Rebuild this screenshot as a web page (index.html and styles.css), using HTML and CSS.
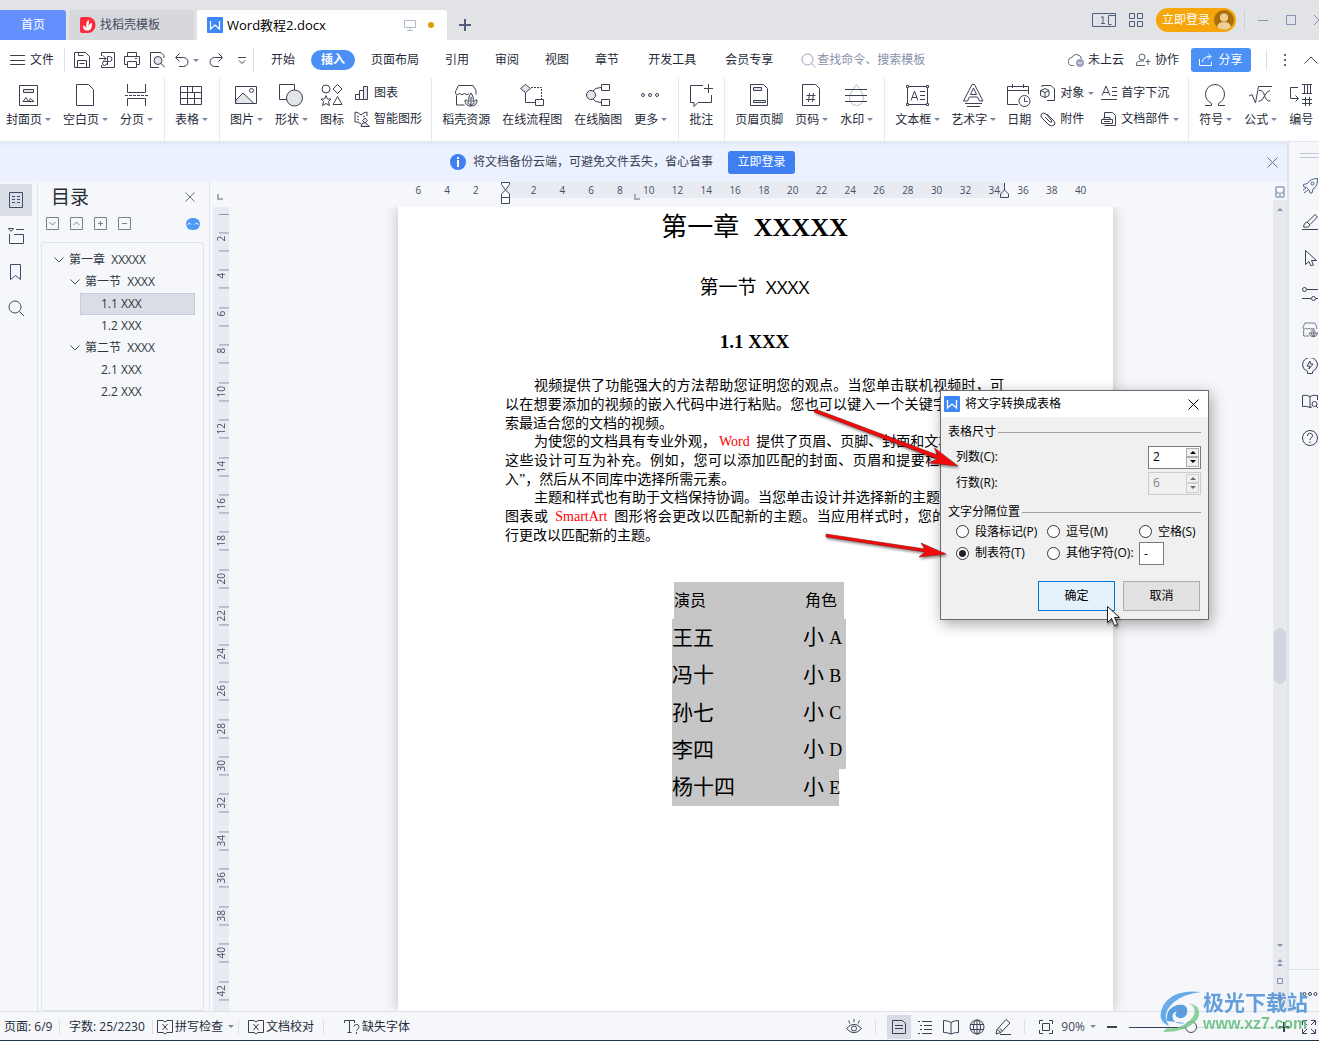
FILE: index.html
```html
<!DOCTYPE html>
<html lang="zh-CN">
<head>
<meta charset="utf-8">
<title>Word教程2.docx</title>
<link rel="stylesheet" href="styles.css">
</head>
<body>
<svg class="defs" aria-hidden="true">
  <symbol id="logo" viewBox="0 0 16 16"><rect width="16" height="16" rx="1" fill="#3d86f5"/><path d="M3.500 4v8l4.500-4 4.500 4V4" fill="none" stroke="#fff" stroke-width="1.300"/></symbol>
  <symbol id="shop" viewBox="0 0 24 24"><path d="M4.500 1.500h14.500l3 5v4M4.500 1.500l-3 6v2q1.500 2.500 4 0 2.500 2.500 5 0 2.500 2.500 4.500 0M2.500 11.500v9.500h8"/><path d="M17 22c-5 0-6-3-6-6 2 0 3 1 4 2-1-4 0-6 2-9 2 3 3 5 2 9 1-1 2-2 4-2 0 3-1 6-6 6zM17 13v9M13.500 18.500l3.500 3 3.500-3" fill="#e3e5ea"/></symbol>
</svg>
<div class="app">
  <header class="tabs">
    <button class="tab home">首页</button>
    <button class="tab docer"><svg width="16" height="16" viewBox="0 0 16 16"><path d="M2 0h6a7.500 8 0 0 1 0 16H2a2 2 0 0 1-2-2V2a2 2 0 0 1 2-2z" fill="#fb2b3a"/><path d="M7 13.500c-3 0-4-2-4-5 2 0 3 2 3.500 3C6 8 6 5 8.500 2.500c1 3 0 6-1 8.500 1-3 2.500-5 4.500-5 0 5-1 7.500-5 7.500z" fill="#fff"/></svg>找稻壳模板</button>
    <button class="tab doc"><svg width="16" height="16"><use href="#logo"/></svg><span class="tabname">Word教程2.docx</span><svg width="12" height="12" viewBox="0 0 12 12" fill="none" stroke="#b0b8cc"><path d="M.5 1.500h11v7H.5zM6 8.500v3M3 11.500h6"/></svg><i class="dot"></i></button>
    <button class="newtab" aria-label="新建"><svg width="12" height="12" viewBox="0 0 12 12" stroke="#4f5d7d" stroke-width="2"><path d="M6 0v12M0 6h12"/></svg></button>
    <span class="grow"></span>
    <div class="winctl">
      <svg width="24" height="14" viewBox="0 0 24 14" fill="none" stroke="#4f5d7d"><path d="M.5.5h23v13H.5zM23 2.500h-6.500v9h3M9 4.500l2-1v7M9 10.500h4"/></svg>
      <svg width="14" height="14" viewBox="0 0 14 14" fill="none" stroke="#4f5d7d"><path d="M.5.500h5v5h-5zM8.500.500h5v5h-5zM.5 8.500h5v5h-5zM8.500 8.500h5v5h-5z"/></svg>
      <button class="login">立即登录<svg width="20" height="20" viewBox="0 0 20 20"><circle cx="10" cy="10" r="10" fill="#a96f0c"/><circle cx="10" cy="7.500" r="4" fill="#f0cf94"/><path d="M3 17q1-5 7-5t7 5q-3 3-7 3t-7-3z" fill="#f0cf94"/></svg></button>
      <i class="vbar"></i>
      <svg width="10" height="10" viewBox="0 0 10 10" stroke="#8492b4"><path d="M0 5.500h10"/></svg>
      <svg width="10" height="10" viewBox="0 0 10 10" fill="none" stroke="#8492b4"><path d="M.5.500h9v9h-9z"/></svg>
      <svg width="10" height="10" viewBox="0 0 10 10" stroke="#8492b4"><path d="M0 0l10 10M10 0L0 10"/></svg>
    </div>
  </header>

  <div class="menubar">
    <button class="file"><svg width="15" height="12" viewBox="0 0 15 12" stroke="#3b4152"><path d="M0 1.500h15M0 6.500h15M0 10.500h15"/></svg>文件</button>
    <i class="vbar"></i>
    <div class="quick">
      <svg viewBox="0 0 16 16"><path d="M.5.500h11l4 4v11H.5zM3.500 15V8.500h9V15M4.500.500v3h5M5.500 11.500h5"/></svg>
      <svg viewBox="0 0 16 16"><path d="M2.500 4V.5h13v15h-13V13M0 6.500h7M4 3.500l3 3-3 3M8.500 13V4.500h2a2.500 2.500 0 0 1 0 5H5.500a2 2 0 1 0 2 2"/></svg>
      <svg viewBox="0 0 16 16"><path d="M3.500 4.500v-4h9v4M3.500 12.500h-3v-8h15v8h-3M3.500 9.500h9v6h-9zM11 6.500h2"/></svg>
      <svg viewBox="0 0 16 16"><path d="M15 6V3.500l-3-3H1.500v15H10"/><circle cx="9" cy="8.500" r="4" fill="#e3e5ea"/><path d="M12 11.500l4 4"/></svg>
      <span class="undo"><svg viewBox="0 0 16 16"><path d="M5.500 1.500l-4 4 4 4M2 5.500h7.500a4.500 4.500 0 0 1 0 9H5"/></svg><i class="caret"></i></span>
      <svg viewBox="0 0 16 16"><path d="M10.500 1.500l4 4-4 4M14 5.500H6.500a4.500 4.500 0 0 0 0 9H11"/></svg>
      <svg class="s8" viewBox="0 0 8 8"><path d="M0 .5h8M1 3.500l3 3 3-3"/></svg>
    </div>
    <i class="vbar"></i>
    <nav class="menus">
      <a href="#">开始</a><a href="#" class="on">插入</a><a href="#">页面布局</a><a href="#">引用</a><a href="#">审阅</a><a href="#">视图</a><a href="#">章节</a><a href="#" class="wide">开发工具</a><a href="#" class="wide">会员专享</a>
    </nav>
    <label class="find"><svg width="15" height="15" viewBox="0 0 15 15" fill="none" stroke="#97a1bd"><circle cx="6.500" cy="6.500" r="5.500"/><path d="M10.500 10.500l4 4"/></svg><input type="text" placeholder="查找命令、搜索模板"></label>
    <span class="grow"></span>
    <div class="share-area">
      <button class="plain"><svg width="16" height="16" viewBox="0 0 16 16" fill="none" stroke="#5a6276"><path d="M6 13.500H4.500a4 4 0 0 1-.5-8 5 5 0 0 1 9.500 1.500"/><circle cx="12" cy="11" r="4" fill="#9aa3ba" stroke="none"/><path d="M10 11h4" stroke="#fff"/></svg>未上云</button>
      <button class="plain"><svg width="15" height="14" viewBox="0 0 15 14" fill="none" stroke="#5a6276"><circle cx="6" cy="4" r="3"/><path d="M9 12.500H.5V11q0-3 3.500-3h4M12 6v6M9.500 8.500h5"/></svg>协作</button>
      <button class="share"><svg width="14" height="14" viewBox="0 0 14 14" fill="none" stroke="#fff"><path d="M.5 6v6.500h12V9M3.500 9q0-5.500 8-5.500M9 .5l3 3-3 3"/></svg>分享</button>
      <i class="vbar"></i>
      <svg width="3" height="12" viewBox="0 0 3 12" fill="#5a6276"><path d="M0 0h2v2H0zM0 5h2v2H0zM0 10h2v2H0z"/></svg>
      <svg width="14" height="8" viewBox="0 0 14 8" fill="none" stroke="#3b4152"><path d="M.5 7.500L7 1l6.500 6.500"/></svg>
    </div>
  </div>

  <div class="ribbon">
    <div class="group">
      <button class="big"><svg viewBox="0 0 24 24"><path d="M3.500 1.500h18v20h-18z"/><path d="M7.500 5.500h10v3h-10z" fill="#e3e5ea"/><path d="M7 17.500l3-4 2.500 4 2-3 3.500 3z"/></svg><span>封面页<i class="caret"></i></span></button>
      <button class="big"><svg viewBox="0 0 24 24"><path d="M3.500.500h12l5 5v16h-17z"/></svg><span>空白页<i class="caret"></i></span></button>
      <button class="big"><svg viewBox="0 0 24 24"><path d="M3.500 0v8.500h18V0M3.500 22v-7.500h18V22"/><path d="M1 11.500h23" stroke-dasharray="3 1"/></svg><span>分页<i class="caret"></i></span></button>
    </div>
    <div class="group">
      <button class="big"><svg viewBox="0 0 24 24"><path d="M1.500 2.500h21v18h-21zM2 8.500h20M2 14.500h20M8.500 2.500v18M15.500 8.500v12M13.500 2.500v6"/></svg><span>表格<i class="caret"></i></span></button>
    </div>
    <div class="group">
      <button class="big"><svg viewBox="0 0 24 24"><path d="M1.500 2.500h21v17h-21z"/><path d="M2 16l7-7 11 10.500H1.500z" fill="#e3e5ea"/><circle cx="17.500" cy="6.500" r="2"/></svg><span>图片<i class="caret"></i></span></button>
      <button class="big"><svg viewBox="0 0 24 24"><path d="M.5.500h15v15H.5z"/><circle cx="15.500" cy="14" r="8" fill="#e3e5ea"/></svg><span>形状<i class="caret"></i></span></button>
      <button class="big"><svg viewBox="0 0 24 24"><circle cx="6" cy="5" r="4"/><path d="M17.500.5l4.500 4.500-4.500 4.500L13 5zM17.500 12.500l4.500 8h-9zM6 11.500l1.500 3.500h3.500l-2.500 2.500 1 4-3.500-2-3.500 2 1-4L1 15h3.500z"/></svg><span>图标</span></button>
      <div class="stack">
        <button class="row"><svg viewBox="0 0 16 16"><path d="M1.500 9.500h4v5h-4zM5.500 5.500h4v9h-4z"/><path d="M9.500 1.500h4v13h-4z" fill="#e3e5ea"/></svg>图表</button>
        <button class="row"><svg viewBox="0 0 16 16"><path d="M7 13q-3-3-6-2V1q3 0 6 3 3-3 6-3v4M3 5l2 1M3 8l2 1M9 6l2-1"/><path d="M11 7l2.500 2.500L11 12 8.500 9.500zM7 15.500q0-4 4-4l4.500 4z" fill="#e3e5ea"/></svg>智能图形</button>
      </div>
    </div>
    <div class="group">
      <button class="big"><svg><use href="#shop"/></svg><span>稻壳资源</span></button>
      <button class="big"><svg viewBox="0 0 24 24"><path d="M5.500.500l5 4-5 4-5-4z" fill="#e3e5ea"/><path d="M5.500 9v9.500H16M15.500 15.500h8v6h-8z"/><path d="M11 3.500h10.500V15" stroke-dasharray="2 1"/></svg><span>在线流程图</span></button>
      <button class="big"><svg viewBox="0 0 24 24"><circle cx="5" cy="11" r="4.500" fill="#e3e5ea"/><path d="M15.500.500h8v6h-8zM15.500 15.500h8v6h-8zM7 7q2-3.500 8-3.500M7 15q2 3.500 8 3.500"/></svg><span>在线脑图</span></button>
      <button class="big"><svg viewBox="0 0 24 24"><circle cx="5" cy="11" r="1.500"/><circle cx="12" cy="11" r="1.500"/><circle cx="19" cy="11" r="1.500"/></svg><span>更多<i class="caret"></i></span></button>
    </div>
    <div class="group">
      <button class="big"><svg viewBox="0 0 24 24"><path d="M14 1.500H1.500v17H5v4l4-4h13.500V11M19.500 0v9M15 4.500h9"/></svg><span>批注</span></button>
    </div>
    <div class="group">
      <button class="big"><svg viewBox="0 0 24 24"><path d="M3.500.500h13l4 4v17h-17z"/><path d="M6.500 3.500h8v3h-8zM6.500 16.500h12v2h-12z" fill="#e3e5ea"/></svg><span>页眉页脚</span></button>
      <button class="big"><svg viewBox="0 0 24 24"><path d="M3.500.500h13l4 4v17h-17zM10.500 9l-1 9M14.500 9l-1 9M7.500 11.500h9M7 15.500h9"/></svg><span>页码<i class="caret"></i></span></button>
      <button class="big"><svg viewBox="0 0 24 24"><path d="M12.500.500q7 9 7 14a7 7 0 0 1-14 0q0-5 7-14z" stroke="#b7bcc9"/><path d="M1 5.500h22M1 11.500h22M1 17.500h22"/></svg><span>水印<i class="caret"></i></span></button>
    </div>
    <div class="group tight">
      <button class="big"><svg viewBox="0 0 24 24"><path d="M2.500 2.500h20v18h-20zM6 16.500L9.500 7l3.500 9.500M7 13.500h5M15 7.500h5M15 11.500h5M15 15.500h5"/><path d="M1.500 1.500h2v2h-2zM21.500 1.500h2v2h-2zM1.500 19.500h2v2h-2zM21.500 19.500h2v2h-2z" fill="#fff"/></svg><span>文本框<i class="caret"></i></span></button>
      <button class="big"><svg viewBox="0 0 24 24"><path d="M2.500 17L11 .5h2.500L22 17h-3.500l-2-4h-8l-2 4zM9.500 10.500h6L12.500 4zM4 19.500h17M6 22.500h13"/></svg><span>艺术字<i class="caret"></i></span></button>
      <button class="big"><svg viewBox="0 0 24 24"><path d="M11 20.500H.5v-18h21V10M.5 6.500h21M5.500 0v4M16.500 0v4"/><circle cx="17.500" cy="17" r="5.500"/><path d="M17.500 13.500v4h3"/></svg><span>日期</span></button>
      <div class="stack">
        <button class="row"><svg viewBox="0 0 16 16"><path d="M2 2V.5h9l3.500 3.500v11.500H7M5 3.500l4 2v5l-4 2-4.500-2v-5zM.5 5.500l4.500 2 4-2M5 7.500v5"/></svg>对象<i class="caret"></i></button>
        <button class="row"><svg viewBox="0 0 16 16"><path d="M5 6l5 5q2 1 2-1L6 3Q3 1 1.500 3T2 7l7 7q3 2 5 0t0-4L7 3"/></svg>附件</button>
      </div>
      <div class="stack">
        <button class="row"><svg viewBox="0 0 16 16"><path d="M1 10.500L5 1l4 9.500M2.500 7.500h5M11 2.500h5M11 6.500h5M11 10.500h5M0 14.500h16"/></svg>首字下沉</button>
        <button class="row"><svg viewBox="0 0 16 16"><path d="M3.500 6V1.500h8l3 3v10h-11M.5 8.500h11v4H.5zM3 8.500v-2h6v2M3 10.500h6"/></svg>文档部件<i class="caret"></i></button>
      </div>
    </div>
    <div class="group">
      <button class="big"><svg viewBox="0 0 24 24"><path d="M2 21.500h6.500v-2Q2.500 16 2.500 10a9.500 9.500 0 0 1 19 0q0 6-6 9.500v2H22"/></svg><span>符号<i class="caret"></i></span></button>
      <button class="big"><svg viewBox="0 0 24 24"><path d="M1 12l3-1.500L7.500 19l3-16.500H24M11 6.500q4-1 5.500 5t6 5.500M22 6.500q-3 0-5.500 5.500T10.500 17.500"/></svg><span>公式<i class="caret"></i></span></button>
      <button class="big"><svg viewBox="0 0 24 24"><path d="M9 3.500H1.500v11H9M6.500 11.500l3 3-3 3M13 .5h10M13 9.500h10M15.500.5v9M18.500.5v9M21.500.5v9M13 15.500h10M13 19.500h10M16.500 13v9M20.500 13v9"/></svg><span>编号</span></button>
    </div>
  </div>

  <div class="below">
    <div class="main">
      <div class="notice">
        <div class="notice-msg"><svg width="16" height="16" viewBox="0 0 16 16"><circle cx="8" cy="8" r="8" fill="#3f7ff2"/><path d="M7 3h2v2H7zM7 6h2v7H7z" fill="#fff"/></svg><span>将文档备份云端，可避免文件丢失，省心省事</span><button>立即登录</button></div>
        <button class="notice-x" aria-label="关闭"><svg width="11" height="11" viewBox="0 0 11 11" stroke="#6b7183"><path d="M.5.500l10 10M10.500.500l-10 10"/></svg></button>
      </div>
      <div class="work">
        <aside class="leftrail">
          <button class="on" aria-label="目录"><svg viewBox="0 0 16 16"><path d="M1.500.500h13v15h-13zM4 4.500h3M9 4.500h3M4 7.500h3M9 7.500h3M4 10.500h3M9 10.500h3"/></svg></button>
          <button aria-label="章节"><svg viewBox="0 0 16 16"><path d="M.5.500h5L3 3.500zM8 1.500h8M1.500 6v9.500h14v-9H6"/></svg></button>
          <button aria-label="书签"><svg viewBox="0 0 16 16"><path d="M2.500.500h10v15l-5-4-5 4z"/></svg></button>
          <button aria-label="查找"><svg viewBox="0 0 16 16"><circle cx="7" cy="7" r="6"/><path d="M11.500 11.500l4.500 4.500"/></svg></button>
        </aside>
        <aside class="toc">
          <div class="toc-head"><h2>目录</h2><button aria-label="关闭"><svg width="10" height="10" viewBox="0 0 10 10" stroke="#6b7183"><path d="M.5.500l9 9M9.500.500l-9 9"/></svg></button></div>
          <div class="toc-tools">
            <svg viewBox="0 0 13 13"><path d="M.5.500h12v12H.5zM3.500 5l3 3 3-3"/></svg>
            <svg viewBox="0 0 13 13"><path d="M.5.500h12v12H.5zM3.500 8l3-3 3 3"/></svg>
            <svg viewBox="0 0 13 13"><path d="M.5.500h12v12H.5zM4 6.500h5M6.500 4v5"/></svg>
            <svg viewBox="0 0 13 13"><path d="M.5.500h12v12H.5zM4 6.500h5"/></svg>
            <span class="grow"></span>
            <svg class="bot" viewBox="0 0 14 12"><rect width="14" height="12" rx="6" fill="#4d9bf5" stroke="none"/><path d="M1.500 6.500l2-1.500 1.500 1.500M9 6.500L10.500 5l2 1.500" stroke="#fff"/></svg>
          </div>
          <div class="tree">
            <a href="#" class="l1"><svg viewBox="0 0 10 6"><path d="M.5.500L5 5 9.500.500"/></svg><span>第一章&nbsp; XXXXX</span></a>
            <a href="#" class="l2"><svg viewBox="0 0 10 6"><path d="M.5.500L5 5 9.500.500"/></svg><span>第一节&nbsp; XXXX</span></a>
            <a href="#" class="l3 sel">1.1 XXX</a>
            <a href="#" class="l3">1.2 XXX</a>
            <a href="#" class="l2"><svg viewBox="0 0 10 6"><path d="M.5.500L5 5 9.500.500"/></svg><span>第二节&nbsp; XXXX</span></a>
            <a href="#" class="l3">2.1 XXX</a>
            <a href="#" class="l3">2.2 XXX</a>
          </div>
        </aside>
        <section class="editor">
          <div class="view">
            <div class="hruler">
              <svg class="tabstop" width="6" height="6" viewBox="0 0 6 6" stroke="#a6acbb" stroke-width="2" fill="none"><path d="M1 0v5h5"/></svg>
              <div class="hscale"><div class="hnums"><i>6</i><i>4</i><i>2</i><i></i><i>2</i><i>4</i><i>6</i><i>8</i><i>10</i><i>12</i><i>14</i><i>16</i><i>18</i><i>20</i><i>22</i><i>24</i><i>26</i><i>28</i><i>30</i><i>32</i><i>34</i><i>36</i><i>38</i><i>40</i></div>
                <svg class="mark first" width="9" height="22" viewBox="0 0 9 22"><path d="M.5.500h8v2L4.500 8l4 4v9.500h-8V12l4-4L.500 2.500zM.5 15.500h8"/></svg>
                <svg class="mark stop" width="6" height="6" viewBox="0 0 6 6"><path d="M1 0v5h5" stroke="#a6acbb" stroke-width="2"/></svg>
                <svg class="mark right" width="9" height="15" viewBox="0 0 9 15"><path d="M4.500 0v7L.500 11v3.500h8V11l-4-4"/></svg>
              </div>
            </div>
            <div class="canvas">
              <div class="vruler"><div class="vscale">
                <i>2</i><i>4</i><i>6</i><i>8</i><i>10</i><i>12</i><i>14</i><i>16</i><i>18</i><i>20</i><i>22</i><i>24</i><i>26</i><i>28</i><i>30</i><i>32</i><i>34</i><i>36</i><i>38</i><i>40</i><i>42</i>
              </div></div>
              <div class="stage">
                <article class="page">
                  <h1><span>第一章</span> <b>XXXXX</b></h1>
                  <h2>第一节 <span>XXXX</span></h2>
                  <h3>1.1 XXX</h3>
                  <p><span class="ln in">视频提供了功能强大的方法帮助您证明您的观点。当您单击联机视频时，可</span><span class="ln">以在想要添加的视频的嵌入代码中进行粘贴。您也可以键入一个关键字以联机搜</span><span class="ln last">索最适合您的文档的视频。</span></p>
                  <p><span class="ln in">为使您的文档具有专业外观，<em>Word</em> 提供了页眉、页脚、封面和文本框设计，</span><span class="ln">这些设计可互为补充。例如，您可以添加匹配的封面、页眉和提要栏。单击“插</span><span class="ln last">入”，然后从不同库中选择所需元素。</span></p>
                  <p><span class="ln in">主题和样式也有助于文档保持协调。当您单击设计并选择新的主题时，图片、</span><span class="ln">图表或 <em>SmartArt</em> 图形将会更改以匹配新的主题。当应用样式时，您的标题会进</span><span class="ln last">行更改以匹配新的主题。</span></p>
                  <div class="cast">
                    <div class="head"><span>演员</span><span>角色</span></div>
                    <div><span>王五</span><span>小 <small>A</small></span></div>
                    <div><span>冯十</span><span>小 <small>B</small></span></div>
                    <div><span>孙七</span><span>小 <small>C</small></span></div>
                    <div><span>李四</span><span>小 <small>D</small></span></div>
                    <div class="end"><span>杨十四</span><span>小 <small>E</small></span></div>
                  </div>
                </article>
                <form class="dialog">
                  <div class="d-title"><svg width="16" height="16"><use href="#logo"/></svg><span>将文字转换成表格</span><button type="button" aria-label="关闭"><svg width="11" height="11" viewBox="0 0 11 11" stroke="#000"><path d="M.5.500l10 10M10.500.500l-10 10"/></svg></button></div>
                  <div class="d-body">
                    <div class="legend">表格尺寸</div>
                    <div class="field"><label for="cols">列数(C):</label><span class="spin"><input id="cols" type="number" value="2"><span class="arrows"><button type="button" aria-label="增加"><i class="up"></i></button><button type="button" aria-label="减少"><i class="down"></i></button></span></span></div>
                    <div class="field off"><label for="rows">行数(R):</label><span class="spin"><input id="rows" type="number" value="6" disabled><span class="arrows"><button type="button" disabled aria-label="增加"><i class="up"></i></button><button type="button" disabled aria-label="减少"><i class="down"></i></button></span></span></div>
                    <div class="legend second">文字分隔位置</div>
                    <div class="radios">
                      <label><input type="radio" name="sep">段落标记(P)</label><label><input type="radio" name="sep">逗号(M)</label><label><input type="radio" name="sep">空格(S)</label>
                      <label><input type="radio" name="sep" checked>制表符(T)</label><label><input type="radio" name="sep">其他字符(O):</label><input class="other" type="text" value="-" aria-label="其他字符">
                    </div>
                    <div class="btns"><button type="button" class="ok">确定</button><button type="button">取消</button></div>
                  </div>
                </form>
                <svg class="marks" viewBox="0 0 820 440" aria-hidden="true">
                  <g fill="#f30b0b" stroke="#8c1010" stroke-width=".6"><path d="M417 202l122.500 46-3-7L560 259l-29-3 8-4L416 205z"/><path d="M428 327l99 15-4-6 25 11-27 3 6-5-99-15z"/></g>
                  <path d="M709.500 399.500v16l4-4 3 7 3-1-3-7h5z" fill="#fff" stroke="#222"/>
                </svg>
              </div>
            </div>
          </div>
          <div class="scroll">
            <svg class="rulerbtn" width="10" height="12" viewBox="0 0 10 12"><rect width="10" height="12" rx="2" fill="#a9b2cc"/><path d="M2 2h6v3L5 7 2 5zM2 8h2v2H2zM6 8h2v2H6z" fill="#fff"/></svg>
            <div class="track">
              <svg width="6" height="4" viewBox="0 0 6 4"><path d="M3 0l3 3H0z"/></svg>
              <i class="before"></i><i class="thumb"></i><i class="after"></i>
              <div class="nav">
                <svg width="6" height="4" viewBox="0 0 6 4"><path d="M0 0h6L3 3z"/></svg>
                <svg width="6" height="8" viewBox="0 0 6 8"><path d="M3 0l3 3H0zM3 4l3 3H0z"/></svg>
                <svg width="6" height="6" viewBox="0 0 6 6"><path d="M.5.500h5v5h-5z" fill="none" stroke="#8492b4"/></svg>
                <svg width="6" height="8" viewBox="0 0 6 8"><path d="M0 0h6L3 3zM0 4h6L3 7z"/></svg>
              </div>
            </div>
          </div>
        </section>
      </div>
    </div>
    <aside class="rightrail">
      <i class="grip"></i>
      <svg viewBox="0 0 16 16" stroke="#53608c"><path d="M15.500.5q-7 0-10 5l-4 1v2l3 1 2.500 2.500 1 3h2l1-4q5-3 4.500-10.500zM1 12l3-2M2 15l4-3"/><circle cx="10.500" cy="5.500" r="1.500"/></svg>
      <svg viewBox="0 0 16 16"><path d="M0 15.500h16M1.500 13q0-4 3.500-5l3 3q-1 3-6.500 2zM5.500 8L13 .5l2.500 2.500L8 10.500"/></svg>
      <svg viewBox="0 0 16 16"><path d="M3.500.500v14l3.500-3 2 4.500 2.500-1-2-4.500h5z"/></svg>
      <svg viewBox="0 0 16 16"><circle cx="2.500" cy="3.500" r="2"/><circle cx="11.500" cy="12.500" r="2"/><path d="M5 3.500h11M0 12.500h9M14 12.500h2"/></svg>
      <svg><use href="#shop"/></svg>
      <svg viewBox="0 0 16 16"><path d="M5.500 13.500Q.5 11 .500 7a7 7 0 0 1 15 0q0 4-5 6.500v2h-5zM8 3L5 8h2.500L7 11l4-5H8.500z"/></svg>
      <svg viewBox="0 0 16 16"><path d="M8 2.500q-4-2-7.500-1v11q3.500-1 7.500 1 1-.5 2-.5M8 2.500q4-2 7.500-1V6M8 2.500v11"/><circle cx="12.500" cy="10" r="2.500"/><path d="M14 12l2 2"/></svg>
      <svg viewBox="0 0 16 16"><circle cx="8" cy="8" r="7.500"/><path d="M5.500 6a2.500 2.500 0 1 1 3.500 2q-1 .5-1 2M8 11.500v1.500"/></svg>
      <span class="grow"></span>
      <i class="hr"></i>
      <svg viewBox="0 0 16 16"><circle cx="2.500" cy="8" r="1.500"/><circle cx="8" cy="8" r="1.500"/><circle cx="13.500" cy="8" r="1.500"/></svg>
    </aside>
  </div>

  <footer class="status">
    <span class="pg">页面: 6/9</span><i class="vbar"></i>
    <span class="wc">字数: 25/2230</span><i class="vbar"></i>
    <button class="chk"><svg viewBox="0 0 16 16"><path d="M6 1.500H.500v12H6l2 1.500 2-1.500h5.500v-12H10L8 3 6 1.500M5.500 5l5 6M10.500 5l-5 6"/></svg>拼写检查<i class="caret"></i></button><i class="vbar"></i>
    <button class="proof"><svg viewBox="0 0 16 16"><path d="M6 1.500H.500v12H6l2 1.500 2-1.500h5.500v-12H10L8 3 6 1.500M5.500 5l5 6M10.500 5l-5 6"/></svg>文档校对</button><i class="vbar"></i>
    <button class="miss"><svg viewBox="0 0 16 16"><path d="M.5 4V1.500h10V4M5.500 1.500v12M3.500 13.500h4M10 7.500q0-2 2.500-2t2.500 2-2.500 4M12.500 13v2"/></svg>缺失字体</button>
    <span class="grow"></span>
    <div class="views">
      <svg viewBox="0 0 16 16"><path d="M.5 9.500Q8 1 15.500 9.500 8 18 .500 9.500zM8 0v3M2.500 1.500l1.500 3M13.500 1.500L12 4.500"/><circle cx="8" cy="9.500" r="2.500"/></svg>
      <i class="vbar"></i>
      <button class="on" aria-label="页面视图"><svg viewBox="0 0 16 16"><path d="M1.500 1.500h10l3 3v10h-13zM4 6.500h8M4 9.500h8"/></svg></button>
      <svg viewBox="0 0 16 16"><path d="M1 2.500h2M5 2.500h10M3 6.500h2M7 6.500h8M3 10.500h2M7 10.500h8M1 14.500h2M5 14.500h10"/></svg>
      <svg viewBox="0 0 16 16"><path d="M8 3.500Q5 1.500.500 1.500v12q4.500 0 7.500 1.500 3-1.500 7.500-1.500v-12Q11 1.500 8 3.500zM8 3.500V15"/></svg>
      <svg viewBox="0 0 16 16"><circle cx="8" cy="8" r="7"/><ellipse cx="8" cy="8" rx="3.500" ry="7"/><path d="M8 1v14M1 5.500h14M1 10.500h14"/></svg>
      <svg viewBox="0 0 16 16"><path d="M2 10.500L11 .5l4 3.500L6 13.500l-5 1.500zM2 10.500l4 3M4.500 9.500l3 2.500M5 15.500h11"/></svg>
      <i class="vbar"></i>
      <svg viewBox="0 0 16 16"><path d="M4.500 4.500h7v7h-7zM1.500 5V1.500H5M11 1.500h3.500V5M14.500 11v3.500H11M5 14.500H1.500V11"/></svg>
    </div>
    <button class="pct">90%<i class="caret"></i></button>
    <svg class="pm" viewBox="0 0 10 10"><path d="M0 5h10" stroke-width="2"/></svg>
    <input class="zoom" type="range" min="0" max="100" value="41" aria-label="缩放">
    <svg class="pm" viewBox="0 0 10 10"><path d="M0 5h10M5 0v10" stroke-width="2"/></svg>
    <svg class="full" viewBox="0 0 16 16"><path d="M1.500 6V1.500H6M10 1.500h4.500V6M14.500 10v4.500H10M6 14.500H1.500V10M2 2l4 4M14 2l-4 4M14 14l-4-4M2 14l4-4"/></svg>
  </footer>
  <div class="brand">
    <svg width="44" height="42" viewBox="0 0 44 42"><path d="M42 1Q14-2 4 15-3 30 10 35 2 23 14 12 24 3 42 1z" fill="#4da0e6"/><path d="M8 30q-2-12 10-16 12-2 10 8-2 6-8 5-6-2-2-7-6 2-4 8 3 6 12 4z" fill="#3f8fd8"/><path d="M29 12q10 4 5 14Q24 39 8 37l-4 4q26 0 35-14 5-12-10-15z" fill="#79c98b"/></svg>
    <div><strong>极光下载站</strong><b>www.xz7.com</b></div>
  </div>
</div>
</body>
</html>
```
FILE: styles.css
```css
* { box-sizing: border-box; }
body {
  margin: 0;
  font: 12px/16px "Open Sans", "Noto Sans CJK SC", sans-serif;
  color: #262b3a;
  overflow: hidden;
}
i, em { font-style: normal; }
a { color: inherit; text-decoration: none; }
button, input { font: inherit; color: inherit; }
button { border: 0; padding: 0; background: none; display: flex; align-items: center; white-space: nowrap; }
svg { flex: none; display: block; }
h1, h2, h3, p { margin: 0; }
.defs { position: absolute; width: 0; height: 0; }
.grow { flex: 1; }
.app { position: relative; height: 100vh; display: flex; flex-direction: column; background: #f5f7fa; }
.caret { flex: none; display: inline-block; border: 3px solid transparent; border-top-color: #7a86a3; border-bottom: 0; margin-left: 3px; vertical-align: 3px; }
.vbar { flex: none; width: 1px; height: 24px; background: #dcdfe6; }

/* title tabs */
.tabs { flex: none; height: 40px; padding-top: 10px; display: flex; gap: 3px; background: #e1e3e7; }
.tab { height: 30px; border-radius: 3px 3px 0 0; }
.home { width: 66px; justify-content: center; background: #638fff; color: #fff; border-radius: 0 3px 0 0; }
.docer { width: 125px; padding-left: 11px; gap: 4px; background: #d6d8dc; color: #444a5c; }
.doc { width: 250px; padding: 0 13px 0 10px; gap: 4px; background: #fff; color: #000; }
.tabname { flex: 1; text-align: left; font-size: 13px; }
.dot { width: 6px; height: 6px; margin-left: 8px; border-radius: 50%; background: #e69a0a; }
.newtab { padding: 0 9px; }
.winctl { display: flex; align-items: center; gap: 13px; height: 20px; margin-right: -5px; }
.login { height: 24px; padding: 0 2px 0 6px; gap: 4px; border-radius: 12px; background: #f5a60b; color: #fff; }
.winctl .vbar { margin-left: -5px; height: 20px; background: #cdd1da; }
.winctl > svg:nth-last-child(-n+2) { margin-left: 5px; }

/* menu bar */
.menubar { flex: none; height: 38px; padding: 2px 0 0 10px; display: flex; align-items: center; background: #fff; white-space: nowrap; }
.file { gap: 5px; margin-right: 10px; }
.quick { display: flex; align-items: center; gap: 9px; margin: 0 7px 0 9px; }
.quick svg { width: 16px; height: 16px; fill: none; stroke: #3b4152; }
.quick .s8 { width: 8px; height: 8px; margin: 2px 0 0 5px; }
.undo { display: flex; align-items: center; }
.menus { display: flex; align-items: center; margin-left: 4px; }
.menus a { padding: 2px 13px; }
.menus .on { margin: 0 3px; padding: 2px 10px; border-radius: 10px; background: #4a90f5; color: #fff; font-weight: bold; }
.menus .wide { margin-left: 3px; }
.find { display: flex; align-items: center; gap: 1px; margin-left: 15px; }
.find input { width: 112px; border: 0; padding: 0; background: none; outline: 0; }
.find input::placeholder { color: #8791ab; opacity: 1; }
.share-area { display: flex; align-items: center; margin-right: 1px; }
.plain { gap: 4px; margin-right: 12px; }
.share { width: 60px; height: 24px; justify-content: center; gap: 5px; border-radius: 3px; background: #4a90f5; color: #fff; }
.share-area .vbar { height: 20px; margin: 0 17px 0 15px; }
.share-area > svg + svg { margin-left: 17px; }

/* ribbon */
.ribbon { flex: none; height: 64px; display: flex; background: #fff; overflow: hidden; border-bottom: 1px solid #e3e6ee; }
.ribbon svg { fill: none; stroke: #3b4152; }
.group { flex: none; display: flex; gap: 12px; padding: 6px 11px 0 10px; border-right: 1px solid #e7e9ee; }
.group:first-child { padding-left: 6px; }
.group:last-child { border-right: 0; }
.tight { gap: 11px; }
.big { flex-direction: column; align-self: flex-start; gap: 4px; }
.big svg { width: 24px; height: 24px; }
.big:has(.caret) svg { margin-right: 2px; }
.stack { display: flex; flex-direction: column; gap: 10px; margin: 1px -2px 0; }
.row { gap: 4px; }
.row .caret { margin-left: 0; }
.row svg { width: 16px; height: 16px; }

/* area under the ribbon */
.below { flex: 1; min-height: 0; display: flex; }
.main { flex: 1; min-width: 0; display: flex; flex-direction: column; }
.notice { flex: none; height: 40px; display: flex; align-items: center; background: linear-gradient(#dfe6f6, #ebf1ff 4px); color: #3c4254; }
.notice-msg { flex: 1; display: flex; align-items: center; justify-content: center; gap: 7px; }
.notice-msg button { width: 67px; height: 23px; margin-left: 8px; justify-content: center; border-radius: 3px; background: #3f7ff2; color: #fff; }
.notice-x { width: 42px; padding-left: 22px; }
.work { flex: 1; min-height: 0; display: flex; }
.leftrail { flex: none; width: 38px; padding-top: 2px; display: flex; flex-direction: column; gap: 4px; border-right: 1px solid #e0e3ea; }
.leftrail button { width: 32px; height: 32px; justify-content: center; border-radius: 2px; }
.leftrail .on { background: #d9dee7; }
.leftrail svg { width: 16px; height: 16px; fill: none; stroke: #3e4a66; }
.toc { flex: none; width: 172px; padding: 0 5px 0 3px; display: flex; flex-direction: column; border-right: 1px solid #e0e3ea; }
.toc-head { height: 30px; padding: 0 9px 0 10px; display: flex; align-items: center; justify-content: space-between; }
.toc-head h2 { font-size: 19px; line-height: 28px; font-weight: normal; }
.toc-tools { height: 23px; padding: 0 4px 0 5px; display: flex; align-items: center; gap: 11px; }
.toc-tools svg { width: 13px; height: 13px; fill: none; stroke: #7a7f8c; }
.toc-tools .bot { width: 14px; height: 12px; }
.tree { flex: 1; margin-top: 7px; padding: 6px 8px 6px 7px; border: 1px solid #e0e3ea; border-radius: 3px; color: #303542; }
.tree a { height: 22px; display: flex; align-items: center; gap: 5px; border: 1px solid transparent; }
.tree svg { width: 10px; height: 6px; fill: none; stroke: #454b5b; }
.tree .l1 { padding-left: 4px; }
.tree .l2 { padding-left: 20px; }
.tree .l3 { margin-left: 31px; padding-left: 20px; }
.tree .sel { background: #d9dde5; border-color: #c7cdd8; }

/* editor */
.editor { flex: 1; min-width: 0; display: flex; }
.view { flex: 1; min-width: 0; display: flex; flex-direction: column; }
.hruler { position: relative; flex: none; height: 25px; padding-left: 28px; display: flex; justify-content: center; }
.tabstop { position: absolute; left: 7px; top: 12px; }
.hscale { position: relative; width: 715px; height: 16px; background: linear-gradient(#e8ebf1, #e8ebf1) 107px 0 / 499px 16px no-repeat; }
.hnums { width: 691px; margin-left: 6px; display: grid; grid-template-columns: repeat(24, 1fr); text-align: center; font-size: 10px; color: #464e64; }
.mark { position: absolute; fill: none; stroke: #3e4660; }
.first { left: 103px; top: 0; fill: #fff; }
.stop { left: 236px; top: 12px; }
.right { left: 602px; top: 1px; }
.canvas { flex: 1; min-height: 0; display: flex; overflow: hidden; }
.vruler { flex: none; width: 16px; margin: 0 9px 0 3px; padding-top: 7px; background: #e8ebf1; overflow: hidden; font-size: 10px; line-height: 16px; color: #464e64; }
.vscale { height: 804px; padding-top: 18px; display: grid; grid-template-rows: repeat(21, 1fr); background: linear-gradient(#8a96b4, #8a96b4) 6px 0 / 10px 1px no-repeat; }
.vscale i { writing-mode: vertical-rl; transform: rotate(180deg); display: flex; justify-content: flex-end; background: linear-gradient(#8a96b4, #8a96b4) 0 100% / 10px 1px no-repeat, linear-gradient(#8a96b4, #8a96b4) 0 50% / 10px 1px no-repeat; padding-bottom: 4px; line-height: 16px; }
.stage { position: relative; flex: none; width: 715px; margin: 0 auto; }
.page { min-height: 100%; padding: 0 109px 0 107px; background: #fff; box-shadow: 0 0 14px rgba(0, 0, 0, .22); color: #000; font-family: "Liberation Serif", "Noto Sans CJK SC", serif; }
.page h1 { font-size: 26px; line-height: 42px; font-weight: 400; text-align: center; }
.page h1 b { margin-left: 8px; }
.page h2 { margin-top: 17px; font: 19px/40px "Noto Sans CJK SC", sans-serif; text-align: center; }
.page h2 span { margin-left: 5px; font-family: "Open Sans", sans-serif; }
.page h3 { margin-top: 15px; font-size: 19px; line-height: 40px; text-align: center; }
.page p { font-size: 14px; line-height: 19px; }
.page h3 + p { margin-top: 14px; }
.page p + p { margin-top: -1px; }
.ln { display: block; height: 19px; white-space: nowrap; text-align: justify; text-align-last: justify; }
.in { padding-left: 29px; }
.last { text-align-last: left; }
.page em { color: #f00; margin: 0 3px; }
.cast { width: 174px; height: 224px; margin: 37px 0 0 167px; display: grid; grid-template-columns: 174px; grid-template-rows: repeat(6, 1fr); font-size: 21px; }
.cast div { display: grid; grid-template-columns: 131px minmax(0, 1fr); align-items: center; background: #c6c6c6; white-space: nowrap; }
.cast small { font-size: 18px; }
.cast .head { margin: 0 2px; font-size: 16px; }
.cast .end { margin-right: 7px; }

/* dialog */
.dialog { position: absolute; left: 542px; top: 183px; width: 269px; border: 1px solid #6b6b6b; background: #f0f0f0; color: #000; box-shadow: 2px 4px 14px rgba(0, 0, 0, .35); }
.d-title { height: 26px; padding: 0 9px 0 3px; display: flex; align-items: center; gap: 5px; background: #fff; }
.d-title span { flex: 1; }
.d-body { padding: 7px 7px 8px; }
.legend { display: flex; align-items: center; gap: 2px; }
.legend::after { content: ""; flex: 1; height: 1px; background: #a0a0a0; }
.field { height: 26px; padding-left: 8px; display: flex; align-items: center; justify-content: space-between; }
.legend + .field { margin-top: 4px; }
.spin { width: 53px; height: 23px; display: flex; border: 1px solid #7a7a7a; background: #fff; }
.spin input { width: 36px; border: 0; padding: 0 4px; background: none; appearance: textfield; outline: 0; }
.spin input::-webkit-inner-spin-button { appearance: none; }
.arrows { flex: 1; display: flex; flex-direction: column; padding: 1px; }
.arrows button { flex: 1; justify-content: center; border: 1px solid #adadad; background: #f0f0f0; }
.up, .down { border: 3px solid transparent; border-bottom-color: #000; border-top: 0; }
.down { border-top: 3px solid #000; border-bottom: 0; }
.off .spin { border-color: #ccc; background: #f0f0f0; color: #838383; }
.off .arrows button { border-color: #d0d0d0; }
.off .up { border-bottom-color: #6d6d6d; }
.off .down { border-top-color: #6d6d6d; }
.second { margin-top: 8px; }
.radios { margin-top: 1px; padding-left: 8px; display: grid; grid-template-columns: 91px 92px 1fr; grid-template-rows: 21px 22px; align-items: center; }
.radios label { display: flex; align-items: center; gap: 6px; white-space: nowrap; }
.radios input[type=radio] { flex: none; appearance: none; width: 13px; height: 13px; margin: 0; border: 1px solid #333; border-radius: 50%; background: #fff; }
.radios input:checked { background: radial-gradient(#222 3px, #fff 4px); }
.other { width: 25px; height: 23px; border: 1px solid #7a7a7a; padding: 0 4px; background: #fff; }
.btns { margin-top: 17px; padding-right: 1px; display: flex; justify-content: flex-end; gap: 8px; }
.btns button { width: 77px; height: 30px; justify-content: center; border: 1px solid #adadad; background: #e1e1e1; }
.btns .ok { border-color: #0078d7; background: #e5f1fb; }
.marks { position: absolute; left: 0; top: 0; width: 820px; height: 440px; pointer-events: none; filter: drop-shadow(1px 2px 1px rgba(0, 0, 0, .4)); }

/* scrollbar */
.scroll { flex: none; width: 14px; display: flex; flex-direction: column; align-items: center; padding-top: 4px; }
.track { flex: 1; width: 14px; margin-top: 2px; padding: 8px 0; display: flex; flex-direction: column; align-items: center; background: #e8e9ef; }
.track svg { fill: #8492b4; }
.before { flex: 8; }
.after { flex: 5; }
.thumb { flex: none; width: 12px; height: 56px; border-radius: 6px; background: #d1d5de; }
.nav { display: flex; flex-direction: column; align-items: center; gap: 11px; }

/* right rail */
.rightrail { flex: none; width: 32px; padding: 11px 0 9px 13px; display: flex; flex-direction: column; gap: 20px; border-left: 2px solid #e0e2ea; overflow: hidden; }
.rightrail svg { width: 16px; height: 16px; fill: none; stroke: #3b4152; }
.rightrail svg[stroke] { stroke: #53608c; }
.grip { height: 5px; margin-left: -2px; border: solid #c3c7d0; border-width: 1px 0; }
.hr { height: 1px; margin: 0 0 -4px -13px; background: #dcdfe6; }

/* status bar */
.status { flex: none; height: 30px; padding: 1px 2px 0 4px; display: flex; align-items: center; border-top: 1px solid #dfe1e7; border-bottom: 1px solid #1d3843; background: #f5f7fa; white-space: nowrap; }
.status svg { width: 16px; height: 16px; fill: none; stroke: #3b4152; }
.status .vbar { height: 14px; }
.status button { gap: 2px; }
.pg { width: 55px; }
.wc { width: 92px; padding-left: 9px; }
.chk { padding: 0 4px; }
.proof { padding: 0 9px; }
.miss { padding-left: 20px; }
.views { display: flex; align-items: center; gap: 10px; }
.views .vbar { margin: 0 3px; }
.views .on { width: 24px; height: 24px; margin: 0 -4px 0 -2px; justify-content: center; background: #d6dbe4; }
.pct { margin: 0 11px 0 7px; color: #454b5b; }
.status .pm { width: 10px; height: 10px; }
.zoom { appearance: none; width: 149px; height: 14px; margin: 0 1px 0 12px; background: linear-gradient(90deg, #33435a 61px, #d3d7df 61px) 0 7px / 100% 1px no-repeat; }
.zoom::-webkit-slider-thumb { appearance: none; width: 12px; height: 12px; border: 1px solid #454b5b; border-radius: 50%; background: #f5f7fa; }
.status .full { margin-left: 12px; }

.brand { position: absolute; right: 11px; bottom: 7px; display: flex; align-items: center; opacity: .85; pointer-events: none; }
.brand div { display: flex; flex-direction: column; }
.brand strong { font-size: 21px; line-height: 24px; color: #4d90d6; }
.brand b { font: bold 16px/20px "Liberation Sans", sans-serif; color: #62bd7b; }
```
